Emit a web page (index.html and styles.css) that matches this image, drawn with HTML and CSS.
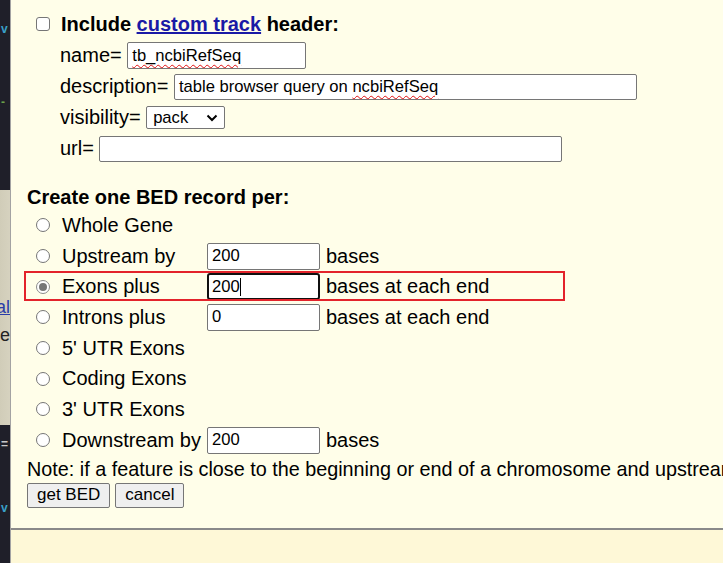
FILE: index.html
```html
<!DOCTYPE html>
<html>
<head>
<meta charset="utf-8">
<link rel="stylesheet" href="styles.css">
</head>
<body>
<div class="page">
  <div class="side">
    <div class="side-dark top"><span class="gl g1">v</span><span class="gl g2">-</span></div>
    <div class="side-gray"><span class="lnk">al</span><span class="se">se</span></div>
    <div class="side-dark bottom"><span class="gl g3">=</span><span class="gl g4">v</span></div>
  </div>
  <div class="frame">
    <div class="content">
      <div class="hdr">
        <span class="cb"></span>
        <b>Include <a href="#" class="link">custom track</a> header:</b>
      </div>
      <div class="fields">
        <div class="frow">name= <span class="inp w-name"><span class="sp">tb_ncbiRefSeq</span></span></div>
        <div class="frow">description= <span class="inp w-desc">table browser query on <span class="sp">ncbiRefSeq</span></span></div>
        <div class="frow">visibility= <span class="sel">pack<svg width="12" height="8" viewBox="0 0 12 8"><path d="M1.5 1.5 L6 6 L10.5 1.5" fill="none" stroke="#000" stroke-width="2"/></svg></span></div>
        <div class="frow">url= <span class="inp w-url"></span></div>
      </div>

      <div class="bedhdr">Create one BED record per:</div>
      <div class="opts">
        <div class="orow"><span class="rl"><span class="rad"></span>Whole Gene</span><span></span><span></span></div>
        <div class="orow"><span class="rl"><span class="rad"></span>Upstream by</span><span class="inp w-num">200</span><span>bases</span></div>
        <div class="orow sel-row"><span class="rl"><span class="rad on"></span>Exons plus</span><span class="inp w-num focus">200<span class="caret"></span></span><span>bases at each end</span></div>
        <div class="orow"><span class="rl"><span class="rad"></span>Introns plus</span><span class="inp w-num">0</span><span>bases at each end</span></div>
        <div class="orow"><span class="rl"><span class="rad"></span>5' UTR Exons</span><span></span><span></span></div>
        <div class="orow"><span class="rl"><span class="rad"></span>Coding Exons</span><span></span><span></span></div>
        <div class="orow"><span class="rl"><span class="rad"></span>3' UTR Exons</span><span></span><span></span></div>
        <div class="orow"><span class="rl"><span class="rad"></span>Downstream by</span><span class="inp w-num">200</span><span>bases</span></div>
        <div class="redbox"></div>
      </div>
      <div class="note">Note: if a feature is close to the beginning or end of a chromosome and upstream/downstream bases are added, they may be truncated in order to avoid extending past the edge of the chromosome.</div>
      <div class="btns"><span class="btn">get BED</span><span class="btn">cancel</span></div>
    </div>
    <div class="footer"></div>
  </div>
</div>
</body>
</html>
```
FILE: styles.css
```css
* { box-sizing: border-box; }
html, body { margin: 0; padding: 0; }
body {
  font-family: "Liberation Sans", Arial, sans-serif;
  font-size: 20px;
  color: #000;
  width: 723px;
  height: 563px;
  overflow: hidden;
}
.page { display: flex; height: 563px; width: 723px; overflow: hidden; }
.side { width: 10px; flex: 0 0 10px; display: flex; flex-direction: column; overflow: hidden; }
.side-dark { background: #1f1f29; position: relative; }
.side-dark.top { height: 190px; }
.side-dark.bottom { flex: 1; }
.side-gray {
  height: 235px;
  width: 20px;
  background: linear-gradient(90deg, #cbc7b2, #d6d2bf);
  display: flex; flex-direction: column; align-items: flex-end;
  padding-top: 103px;
  font-size: 18px;
  line-height: 28px;
  margin-left: -10px;
}
.lnk { color: #2a3da8; text-decoration: underline; }
.se { color: #222; }
.gl { position: absolute; left: 1px; font-size: 12px; font-weight: bold; }
.g1 { top: 22px; color: #3aa0c8; }
.g2 { top: 95px; color: #6aa24a; }
.g3 { top: 12px; color: #c8c8c8; }
.g4 { top: 76px; color: #3aa0c8; }

.frame {
  flex: 1 1 auto;
  min-width: 0;
  overflow: hidden;
  border-left: 1px solid #a3a3a3;
  display: flex; flex-direction: column;
}
.content {
  flex: 1;
  background: #fffee9;
  padding: 12px 0 0 16px;
}
.footer {
  height: 35px;
  border-top: 2px solid #8a8a8a;
  background: #fef8d7;
}
.hdr { display: flex; align-items: center; height: 24px; padding-left: 9px; }
.hdr b { margin-left: 11px; }
.link { color: #1a1aa6; text-decoration: underline; }
.cb {
  width: 14px; height: 14px;
  border: 1px solid #767676; border-radius: 3px; background: #fff;
}
.fields { padding-left: 33px; margin-top: 4px; }
.frow { display: flex; align-items: center; height: 31px; white-space: pre; }
.inp {
  display: inline-flex; align-items: center;
  height: 27px;
  border: 1px solid #767676;
  border-radius: 2px;
  background: #fff;
  font-size: 16.6px;
  padding: 0 4px;
  white-space: pre;
}
.sp { text-decoration: underline wavy #e01010; text-decoration-thickness: 1px; text-underline-offset: 3px; }
.w-name { width: 179px; }
.w-desc { width: 463px; height: 26px; }
.w-url { width: 463px; height: 26px; }
.sel {
  display: inline-flex; align-items: center; justify-content: space-between;
  width: 79px; height: 23px;
  border: 1px solid #767676; border-radius: 2px; background: #fff;
  font-size: 16.6px; padding: 0 6px 0 6px;
}
.bedhdr { font-weight: bold; margin-top: 21px; height: 24px; line-height: 24px; }
.opts {
  position: relative;
  display: grid;
  grid-template-columns: max-content 119px max-content;
  margin-top: 1px;
}
.orow { display: contents; }
.orow > span { display: flex; align-items: center; height: 30.7px; }
.rl { padding-left: 9px; padding-right: 6px; }
.rad {
  width: 14px; height: 14px; border-radius: 50%;
  border: 1px solid #767676; background: #fff;
  margin-right: 12px; position: relative;
}
.rad.on { border-color: #8a8a8a; }
.rad.on::after {
  content: ""; position: absolute; left: 2px; top: 2px;
  width: 8px; height: 8px; border-radius: 50%; background: #767676;
}
.orow > .inp { height: 27px; width: 113px; align-self: center; }
.inp.focus { border: 2px solid #101010; border-radius: 3px; padding-left: 3px; }
.caret { display: inline-block; width: 1px; height: 18px; background: #000; }
.redbox {
  position: absolute;
  left: -3px; top: 61px;
  width: 541px; height: 30px;
  border: 2px solid #e3232b;
}
.note { white-space: nowrap; font-size: 19.8px; margin-top: 2px; line-height: 23px; }
.btns { display: flex; gap: 5px; margin-top: 2px; }
.btn {
  font-size: 17px;
  background: #efefef;
  border: 1px solid #767676;
  border-radius: 2px;
  height: 25px;
  padding: 0 9px;
  display: flex; align-items: center;
}
```
